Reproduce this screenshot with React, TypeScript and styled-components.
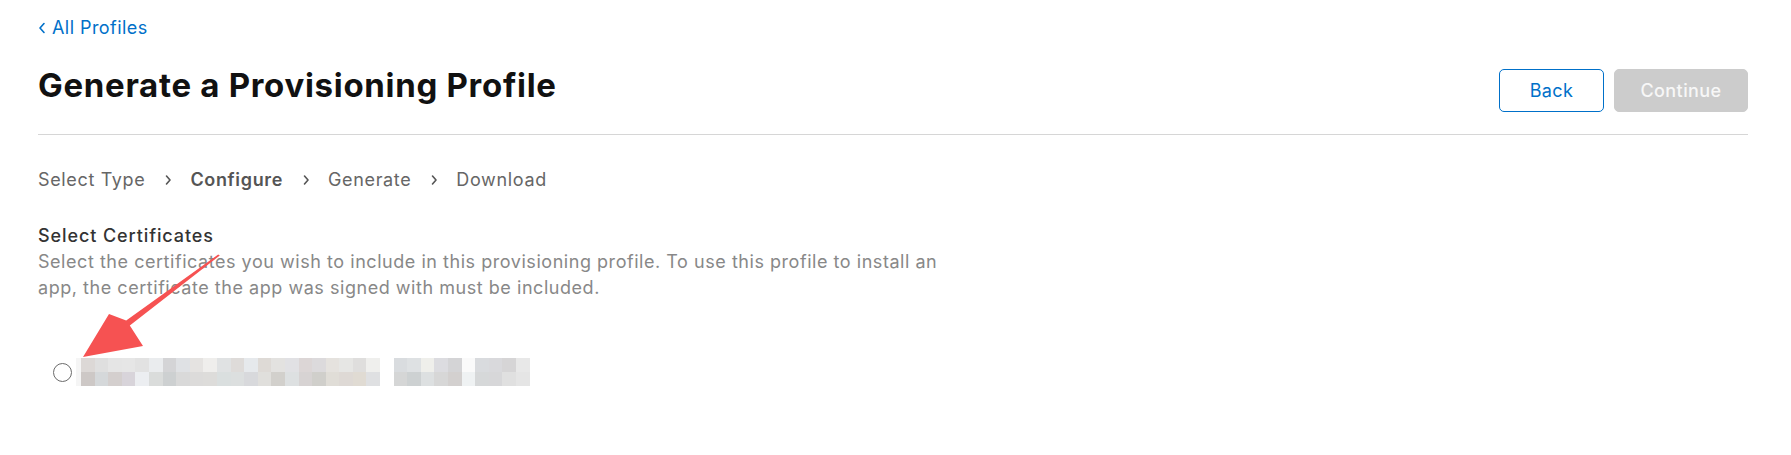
import React from 'react';
import styled, {createGlobalStyle} from 'styled-components';

const GlobalStyle = createGlobalStyle`
    html, body {
        margin: 0;
        padding: 0;
        background: #fff;
    }
    body {
        font-family: Inter, "Noto Sans", "Liberation Sans", sans-serif;
        -webkit-font-smoothing: antialiased;
    }
`

const blue = '#0070c9';

const Page = styled.div`
    position: relative;
    width: 1791px;
    height: 455px;
    box-sizing: border-box;
    padding: 16px 43px 0 38px;
    overflow: hidden;
`
const BackLink = styled.a`
    display: inline-flex;
    align-items: center;
    gap: 6px;
    font-size: 18px;
    line-height: 24px;
    letter-spacing: 0.45px;
    color: ${blue};
    text-decoration: none;
    cursor: pointer;
`
const Header = styled.div`
    display: flex;
    justify-content: space-between;
    align-items: flex-start;
    margin-top: 25px;
    padding-bottom: 22px;
    border-bottom: 1px solid #d6d6d6;
`
const Title = styled.h1`
    margin: 0;
    font-size: 33px;
    line-height: 40px;
    font-weight: 700;
    color: #111;
    letter-spacing: 0.7px;
`
const Actions = styled.div`
    display: flex;
    gap: 10px;
    margin-top: 4px;
`

type ButtonProps = {
    primary?: boolean;
}

const Button = styled.button<ButtonProps>`
    height: 43px;
    padding: 0;
    width: ${({primary}) => primary ? '134px' : '105px'};
    border-radius: 5px;
    border: 1px solid ${({primary}) => primary ? '#cccccc' : blue};
    background: ${({primary}) => primary ? '#cccccc' : '#fff'};
    color: ${({primary}) => primary ? '#f7f7f7' : blue};
    font-family: inherit;
    font-size: 18px;
    letter-spacing: 0.4px;
    font-weight: ${({primary}) => primary ? 500 : 400};
    cursor: ${({primary}) => primary ? 'default' : 'pointer'};
`
const Steps = styled.nav`
    display: flex;
    align-items: center;
    margin-top: 33px;
    font-size: 18px;
    line-height: 24px;
    letter-spacing: 0.65px;
    color: #666;
`

type StepProps = {
    current?: boolean;
}

const Step = styled.span<StepProps>`
    font-weight: ${({current}) => current ? 600 : 400};
    color: ${({current}) => current ? '#555' : '#666'};
`
const Chevron = styled.span`
    display: inline-flex;
    width: 45px;
    justify-content: center;
    color: #555;
`
const Section = styled.section`
    margin-top: 32px;
`
const SectionTitle = styled.h2`
    margin: 0;
    font-size: 18px;
    line-height: 24px;
    font-weight: 500;
    letter-spacing: 0.9px;
    color: #333;
`
const SectionText = styled.p`
    margin: 1px 0 0 0;
    max-width: 925px;
    font-size: 18px;
    line-height: 26px;
    letter-spacing: 0.54px;
    color: #888;
`
const CertRow = styled.label`
    display: flex;
    align-items: center;
    margin-top: 55px;
    padding-left: 15px;
    height: 32px;
`
const Radio = styled.span`
    width: 19px;
    height: 19px;
    box-sizing: border-box;
    border: 1.5px solid #6b6b6b;
    border-radius: 50%;
    background: #fff;
    flex-shrink: 0;
`
const Blur = styled.div`
    display: flex;
    margin-left: 4px;
    height: 28px;
`
const BlurEdge = styled.div`
    width: 5px;
    background: #f5f5f5;
`
const BlurGrid = styled.div`
    display: grid;
    grid-template-rows: 14px 14px;
    grid-auto-flow: column;
    grid-auto-columns: 13.6px;
`
const BlurGap = styled.div`
    width: 13.6px;
`
const Cell = styled.div`
    width: 100%;
    height: 100%;
`
const Arrow = styled.svg`
    position: absolute;
    left: 0;
    top: 0;
    pointer-events: none;
`

const topA = ['#dcd8d6','#dfdfdf','#e5e5e5','#e6e6e6','#e2e2e2','#eaecee','#d4d4d6','#dfe1e4','#e5e3e1','#efeeec','#e0e2e3','#dedbd9','#e6e9ec','#dedad6','#e3e2e0','#e1e1e4','#dcd6d6','#dcdadc','#e5e2de','#e6e6e4','#dfdedd','#efefed'];
const botA = ['#cdc8c6','#d5d8da','#d4cfce','#d8d4da','#eceef1','#dadcdb','#cdd0d1','#d9d9d9','#dcdbda','#dddcda','#dadfdf','#dcdfdf','#d8d9dc','#e0dfdc','#d2d0cc','#dde0e1','#d7d3d3','#d0cfcb','#e0ddd7','#ded9d5','#e0dbd3','#dfe0e2'];
const topB = ['#d9dcdf','#dee1e3','#efefeb','#dcdce0','#d4d4d6','#fafafa','#d9dbde','#d9d9dc','#d6d5d6','#e8e8e8'];
const botB = ['#d5d6d6','#cdd1d2','#dde0e1','#d7d7d7','#d3d0cf','#eff2f3','#d6d8d9','#d7d7d9','#e0e0e0','#e5e5e5'];

function Pixels({top, bottom}: {top: string[]; bottom: string[]}) {
    return (
        <BlurGrid>
            {top.map((c, i) => (
                <React.Fragment key={i}>
                    <Cell style={{background: c}} />
                    <Cell style={{background: bottom[i]}} />
                </React.Fragment>
            ))}
        </BlurGrid>
    )
}

export default function App() {
    const steps = ['Select Type', 'Configure', 'Generate', 'Download'];
    return (
        <>
        <GlobalStyle />
        <Page>
            <BackLink>
                <svg width="8" height="12" viewBox="0 0 8 12">
                    <path d="M6 1.5 L2 6 L6 10.5" fill="none" stroke={blue} strokeWidth="1.6" strokeLinecap="round" strokeLinejoin="round" />
                </svg>
                All Profiles
            </BackLink>
            <Header>
                <Title>Generate a Provisioning Profile</Title>
                <Actions>
                    <Button>Back</Button>
                    <Button primary disabled>Continue</Button>
                </Actions>
            </Header>
            <Steps>
                {steps.map((s, i) => (
                    <React.Fragment key={s}>
                        {i > 0 && (
                            <Chevron>
                                <svg width="8" height="12" viewBox="0 0 8 12">
                                    <path d="M2.5 2 L6 6 L2.5 10" fill="none" stroke="#555" strokeWidth="1.6" strokeLinecap="round" strokeLinejoin="round" />
                                </svg>
                            </Chevron>
                        )}
                        <Step current={s === 'Configure'}>{s}</Step>
                    </React.Fragment>
                ))}
            </Steps>
            <Section>
                <SectionTitle>Select Certificates</SectionTitle>
                <SectionText>
                    Select the certificates you wish to include in this provisioning profile. To use this profile to install an app, the certificate the app was signed with must be included.
                </SectionText>
                <CertRow>
                    <Radio />
                    <Blur>
                        <BlurEdge />
                        <Pixels top={topA} bottom={botA} />
                        <BlurGap />
                        <Pixels top={topB} bottom={botB} />
                    </Blur>
                </CertRow>
            </Section>
            <Arrow width="1791" height="455" viewBox="0 0 1791 455">
                <polygon
                    fill="#f65252"
                    points="219.8,255.6 129.8,325.4 143,346 83,357 109,314 126.2,320.6 218.2,254.4"
                />
            </Arrow>
        </Page>
        </>
    )
}
